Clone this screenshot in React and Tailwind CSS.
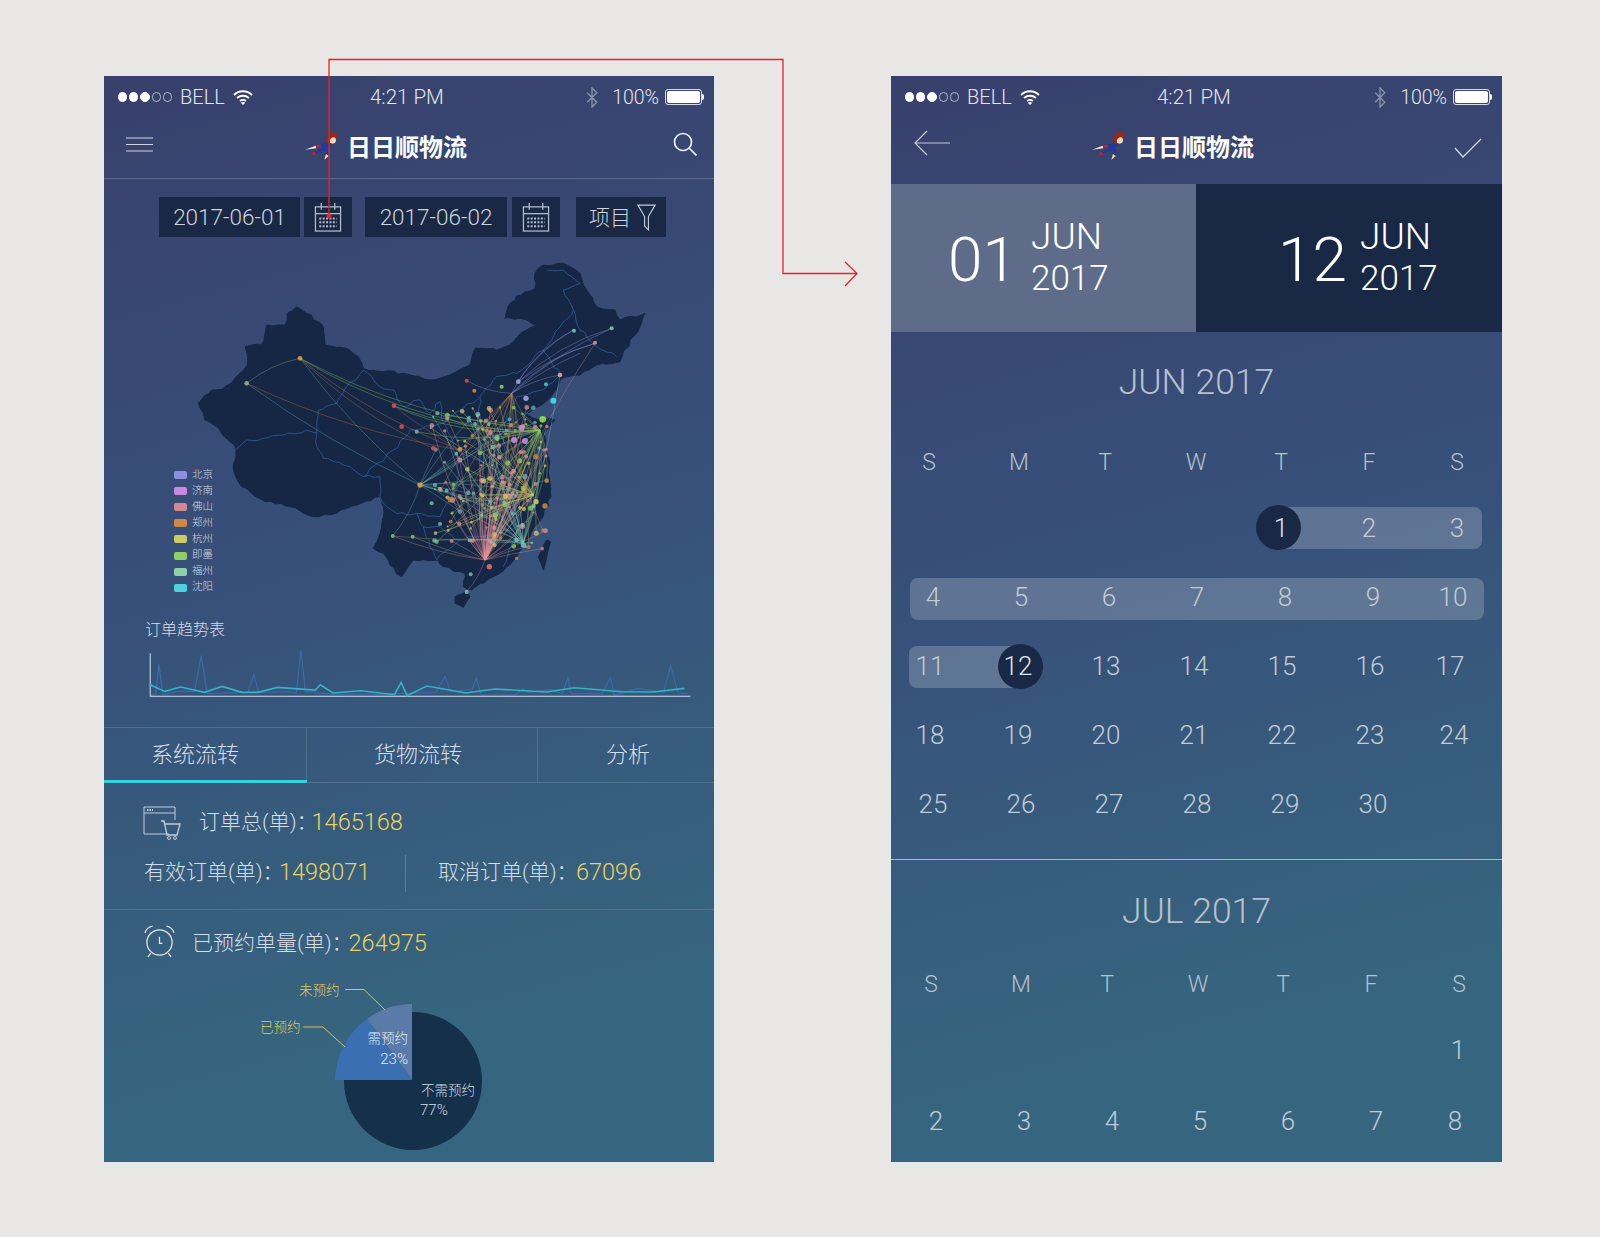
import React from 'react';

const LIGHT = "font-['Roboto','Noto_Sans_CJK_SC',sans-serif] font-light";

// seeded so the map comes out the same every time
function makeRandom(seed) {
  let s = seed;
  return () => {
    s = (s + 0x6d2b79f5) | 0;
    let t = Math.imul(s ^ (s >>> 15), 1 | s);
    t = (t + Math.imul(t ^ (t >>> 7), 61 | t)) ^ t;
    return ((t ^ (t >>> 14)) >>> 0) / 4294967296;
  };
}

// breaks each segment up a bit so outlines don't look like straight cuts
function rugged(pts, seed, amount, closed) {
  const rnd = makeRandom(seed);
  const out = [];
  const list = closed ? [...pts, pts[0]] : pts;
  list.forEach((p, i) => {
    if (i === 0) {
      out.push(p);
      return;
    }
    const q = list[i - 1];
    const len = Math.hypot(p[0] - q[0], p[1] - q[1]);
    const steps = Math.max(1, Math.round(len / 16));
    for (let k = 1; k <= steps; k++) {
      const t = k / steps;
      const j = k === steps ? 0 : amount;
      out.push([q[0] + (p[0] - q[0]) * t + (rnd() - 0.5) * j, q[1] + (p[1] - q[1]) * t + (rnd() - 0.5) * j]);
    }
  });
  return out.map((p) => `${p[0].toFixed(1)},${p[1].toFixed(1)}`).join(' ');
}

const CHINA = rugged([
  [145, 460], [185, 420], [215, 418], [255, 385], [292, 345], [285, 290], [335, 285], [350, 225], [405, 225], [412, 190],
  [440, 170], [470, 190], [520, 230], [525, 285], [590, 295], [625, 320], [640, 355], [700, 365], [760, 370], [825, 388],
  [870, 385], [900, 375], [960, 345], [975, 295], [1040, 300], [1090, 275], [1130, 240], [1160, 225], [1110, 205], [1065, 205],
  [1080, 160], [1125, 125], [1155, 115], [1155, 70], [1180, 45], [1240, 40], [1290, 70], [1310, 120], [1340, 170], [1395, 180],
  [1410, 210], [1485, 190], [1470, 230], [1440, 270], [1410, 335], [1390, 340], [1340, 345], [1290, 375], [1235, 385], [1210, 430],
  [1165, 470], [1125, 490], [1150, 505], [1215, 510], [1180, 550], [1195, 620], [1200, 700], [1203, 740], [1180, 800], [1140, 860],
  [1100, 920], [1070, 950], [1030, 980], [965, 1020], [940, 1010], [945, 970], [880, 950], [865, 930], [790, 930], [755, 980],
  [720, 945], [700, 910], [670, 895], [690, 850], [700, 800], [700, 770], [690, 740], [620, 765], [560, 790], [490, 800],
  [420, 770], [345, 755], [275, 710], [250, 660], [258, 600], [240, 575], [200, 530], [165, 510],
], 3, 9, true);
const HAINAN = rugged([[915, 1040], [950, 1025], [960, 1040], [940, 1072], [915, 1060]], 4, 4, true);
const TAIWAN = rugged([[1190, 870], [1202, 875], [1180, 960], [1165, 920]], 5, 3, true);

const BORDERS = [
  [[255, 600], [290, 570], [340, 565], [400, 555], [470, 540], [500, 550], [500, 590], [520, 625], [600, 650], [640, 680], [690, 680], [690, 740], [710, 770], [740, 790], [800, 790], [820, 830], [870, 830], [930, 870]],
  [[500, 550], [505, 480], [560, 460], [590, 410], [640, 360], [665, 380], [690, 410], [730, 420], [760, 470], [810, 450], [840, 490], [870, 455], [880, 520], [930, 480], [990, 440], [1040, 380], [1100, 370], [1180, 300], [1270, 180], [1240, 120], [1290, 100], [1240, 60], [1190, 60]],
  [[1270, 180], [1290, 240], [1340, 290], [1400, 320]],
  [[1180, 300], [1230, 375], [1180, 420], [1100, 440]],
  [[640, 680], [730, 600], [780, 540], [880, 520], [920, 600], [920, 700], [870, 800], [800, 790]],
  [[920, 600], [1000, 640], [1060, 580], [1170, 540]],
  [[920, 700], [1000, 760], [1090, 740], [1190, 690]],
  [[1000, 760], [990, 860], [930, 870], [860, 930]],
  [[990, 860], [1110, 830], [1160, 790]],
  [[1110, 830], [1060, 950]],
  [[990, 440], [985, 560], [1000, 640], [1000, 760]],
  [[1060, 580], [1090, 740], [1110, 830]],
  [[820, 830], [860, 930]],
  [[1100, 440], [1060, 520], [1060, 580]],
].map((b, i) => rugged(b, 20 + i, 10, false));

const LEGEND = [
  ['北京', '#8f8fe0'], ['济南', '#c98ae0'], ['佛山', '#d08a90'], ['郑州', '#cf8848'],
  ['杭州', '#cdc868'], ['即墨', '#8fcf68'], ['福州', '#90cfa8'], ['沈阳', '#50d0dc'],
];

const curve = (a, b, bend) => {
  const mx = (a[0] + b[0]) / 2 - (b[1] - a[1]) * bend;
  const my = (a[1] + b[1]) / 2 + (b[0] - a[0]) * bend;
  return `M${a[0]} ${a[1]} Q${mx} ${my} ${b[0]} ${b[1]}`;
};

function buildRoutes() {
  const rnd = makeRandom(11);
  const routes = [
    [[450, 325], [290, 400], '#8fb090', 0.12],
    [[450, 325], [1170, 540], '#90d060', 0.1],
    [[450, 325], [1100, 545], '#90d060', 0.11],
    [[450, 325], [930, 600], '#c87850', 0.08],
    [[450, 325], [850, 595], '#c87850', 0.09],
    [[450, 325], [810, 705], '#6fb0b0', 0.06],
    [[290, 400], [930, 600], '#c07850', 0.07],
    [[290, 400], [810, 705], '#6fb0b0', 0.05],
    [[730, 467], [1170, 540], '#90d060', 0.1],
    [[730, 467], [1170, 540], '#90d060', 0.14],
    [[730, 467], [930, 600], '#d06060', 0.04],
    [[800, 545], [1170, 540], '#90d060', 0.12],
    [[862, 490], [1170, 540], '#90d060', 0.16],
    [[950, 392], [1085, 430], '#9c95e0', 0.12],
    [[1385, 235], [1100, 400], '#9c95e0', 0.12],
    [[1385, 235], [1085, 430], '#9c95e0', 0.08],
    [[1335, 280], [1100, 400], '#9c95e0', 0.1],
    [[1335, 280], [1085, 430], '#9c95e0', 0.14],
    [[1270, 240], [1100, 400], '#9c95e0', 0.12],
    [[1270, 240], [1085, 430], '#9c95e0', 0.16],
    [[1290, 310], [1085, 430], '#9c95e0', 0.06],
    [[1230, 375], [1085, 430], '#9c95e0', 0.1],
    [[1335, 280], [1010, 930], '#d08a90', 0.06],
    [[950, 1025], [1005, 930], '#d08a90', 0.1],
    [[728, 858], [1005, 930], '#d08a90', 0.06],
    [[728, 858], [810, 705], '#6fb0b0', 0.1],
    [[788, 860], [1005, 930], '#d08a90', 0.05],
    [[728, 858], [1100, 870], '#c08a50', 0.03],
    [[1170, 540], [1190, 690], '#90d060', -0.12],
    [[1170, 540], [1150, 735], '#90d060', -0.14],
    [[1170, 540], [1120, 880], '#90d060', -0.1],
    [[1170, 540], [1158, 755], '#90d060', -0.18],
    [[1230, 375], [1120, 880], '#70c0c0', -0.03],
  ];
  const hubs = [
    [[1005, 930], '#e29097', 64, 0.1],
    [[1170, 540], '#90d060', 26, 0.07],
    [[1150, 735], '#d0c860', 30, 0.08],
    [[1120, 880], '#80c8b0', 26, 0.08],
    [[810, 705], '#6fb0b0', 14, 0.12],
    [[1085, 430], '#d08a48', 14, 0.1],
  ];
  const dots = [];
  hubs.forEach(([hub, color, count, bend]) => {
    for (let i = 0; i < count; i++) {
      const t = [840 + Math.pow(rnd(), 0.7) * 355, 470 + rnd() * 430];
      routes.push([hub, t, color, (rnd() - 0.5) * 2 * bend]);
      dots.push([t[0], t[1], 3 + rnd() * 5, color]);
    }
  });
  return { routes, dots };
}

const { routes: ROUTES, dots: DOTS } = buildRoutes();

const BIG_DOTS = [
  [450, 325, 7, '#d8a040'], [290, 400, 7, '#90b080'], [732, 467, 7, '#d05050'], [755, 530, 7, '#d05050'],
  [1210, 452, 9, '#40e0f0'], [1178, 508, 10, '#90e050'], [1115, 533, 9, '#c98ae0'], [1092, 570, 9, '#c98ae0'],
  [1125, 573, 9, '#c98ae0'], [1128, 445, 8, '#a8a0e0'], [1105, 395, 7, '#a8a0e0'], [1385, 235, 6, '#90c0b0'],
  [1272, 242, 6, '#80c0b0'], [1335, 278, 6, '#e09090'], [1230, 375, 7, '#e0a0b0'], [950, 392, 6, '#d05050'],
  [973, 422, 6, '#d08a48'], [810, 705, 8, '#d8a040'], [728, 858, 6, '#80b090'], [788, 860, 6, '#80b090'],
  [1018, 950, 8, '#e07070'], [962, 973, 6, '#70b0a0'], [950, 1026, 6, '#80c0b0'], [850, 595, 7, '#d05050'],
  [930, 598, 7, '#d8a040'], [1158, 755, 8, '#d0c860'], [1185, 768, 8, '#c08a40'], [1190, 692, 7, '#c08a40'],
  [1120, 885, 8, '#70c0c0'], [1100, 870, 7, '#70c0c0'], [870, 822, 6, '#70b0a0'], [890, 722, 6, '#70b0a0'],
  [845, 760, 6, '#70b0a0'], [1100, 925, 5, '#c08a40'], [1055, 410, 6, '#90d060'], [862, 490, 6, '#80a8a0'],
  [800, 545, 6, '#80a8a0'], [1188, 403, 6, '#50c0c0'], [855, 705, 6, '#70b0a0'], [870, 716, 6, '#90b8b0'],
];

function ChinaMap() {
  return (
    <svg viewBox="0 0 1560 1110" className="block w-[520px] h-[370px] blur-[0.3px]">
      {[CHINA, HAINAN, TAIWAN].map((shape, i) => (
        <polygon key={i} points={shape} fill="#152745" stroke="#152745" strokeWidth="3" strokeLinejoin="round" />
      ))}
      {BORDERS.map((b, i) => (
        <polyline key={i} points={b} fill="none" stroke="#2a5c98" strokeWidth="2.5" strokeLinejoin="round" />
      ))}
      {ROUTES.map(([a, b, color, bend], i) => (
        <path key={i} d={curve(a, b, bend)} fill="none" stroke={color} strokeWidth="2" strokeOpacity="0.55" />
      ))}
      {DOTS.map(([x, y, r, color], i) => (
        <circle key={i} cx={x} cy={y} r={r} fill={color} fillOpacity="0.75" />
      ))}
      {BIG_DOTS.map(([x, y, r, color], i) => (
        <circle key={i} cx={x} cy={y} r={r} fill={color} fillOpacity="0.9" />
      ))}
    </svg>
  );
}

const TREND = '128,225 165,245 205,232 265,248 310,230 360,248 400,248 450,233 545,241 558,225 590,250 660,243 745,255 762,218 777,258 827,229 925,250 1000,238 1130,247 1200,234 1320,246 1400,247 1478,236';
const SPIKES = '128,255 142,255 150,162 160,255 200,245 240,245 257,137 272,252 375,248 390,195 402,248 480,246 497,250 509,122 520,246 590,254 700,254 850,248 873,200 887,246 942,238 952,205 964,256 1050,256 1070,238 1085,248 1140,240 1170,252 1183,203 1192,252 1270,252 1291,203 1300,258 1360,236 1425,248 1443,168 1462,250 1485,252';

function TrendChart() {
  return (
    <svg viewBox="125 120 1372 145" preserveAspectRatio="none" className="block w-[543px] h-[48px]">
      <polyline points={SPIKES} fill="none" stroke="#3a6aa8" strokeWidth="1.2" vectorEffect="non-scaling-stroke" />
      <polyline points="128,130 128,260 1493,260" fill="none" stroke="#d8e0e8" strokeWidth="1" vectorEffect="non-scaling-stroke" />
      <polyline points={TREND} fill="none" stroke="#2fb4c8" strokeWidth="1.6" vectorEffect="non-scaling-stroke" />
    </svg>
  );
}

function StatusBar() {
  return (
    <div className={`flex items-center h-[42px] pl-[14px] pr-[10px] text-[#e2e6ee] ${LIGHT}`}>
      <div className="flex items-center gap-[2px] w-[54px]">
        {[1, 1, 1, 0, 0].map((on, i) => (
          <span key={i} className={`size-[9.5px] rounded-full border border-white ${on ? 'bg-white' : 'opacity-60'}`} />
        ))}
      </div>
      <span className="ml-[8px] text-[20px] w-[53px]">BELL</span>
      <svg viewBox="0 0 20 15" className="w-[20px] h-[15px]" fill="none" stroke="#fff" strokeWidth="1.8">
        <path d="M1 5 C6 0 14 0 19 5" />
        <path d="M4 8 C7.500 5 12.500 5 16 8" />
        <path d="M7 11 C9 9.500 11 9.500 13 11" />
        <path d="M10 15 L7.800 12.800 C9 11.800 11 11.800 12.200 12.800 Z" fill="#fff" stroke="none" />
      </svg>
      <span className="ml-[117px] text-[20.500px] whitespace-nowrap">4:21 PM</span>
      <div className="ml-auto flex items-center">
        <svg viewBox="0 0 12 22" className="w-[12px] h-[21px]" fill="none" stroke="#8a94aa" strokeWidth="1.4">
          <path d="M1 6 L11 16 L6 21 L6 1 L11 6 L1 16" />
        </svg>
        <span className="ml-[14px] text-[19.500px] pt-[1px]">100%</span>
        <div className="ml-[6px] flex items-center">
          <div className="w-[37px] h-[16px] rounded-[3px] border border-white/80 p-[1px]">
            <div className="w-full h-full rounded-[2px] bg-white" />
          </div>
          <div className="w-[2px] h-[6px] rounded-r-sm bg-white" />
        </div>
      </div>
    </div>
  );
}

function Logo() {
  return (
    <svg viewBox="30 22 105 90" className="w-[35px] h-[30px] shrink-0">
      <path d="M30 78 L62 66 L64 74 Z" fill="#f3ead0" />
      <path d="M88 108 L93 91 L101 97 Z" fill="#f0e4b0" />
      <path d="M64 71 L92 62 M60 90 L88 74 M97 92 L98 76" stroke="#1f3a9c" strokeWidth="7" fill="none" />
      <path d="M103 58 L84 80" stroke="#1f3a9c" strokeWidth="13" fill="none" />
      <ellipse cx="70" cy="68" rx="8" ry="4" fill="#c81f2e" transform="rotate(-15 70 68)" />
      <ellipse cx="57" cy="90" rx="6" ry="5" fill="#c81f2e" />
      <circle cx="113" cy="50" r="10" fill="#f4d4b4" />
      <path d="M96 58 C91 36 104 20 118 24 C128 26 131 38 128 43 C120 37 109 39 105 49 L103 64 Z" fill="#8e2a1e" />
    </svg>
  );
}

function Title() {
  return (
    <div className="flex items-center">
      <Logo />
      <span className="ml-[7px] text-[24px] font-bold text-white font-['Noto_Sans_CJK_SC',sans-serif] leading-none">日日顺物流</span>
    </div>
  );
}

function CalendarIcon() {
  return (
    <svg viewBox="0 0 28 30" className="w-[28px] h-[29px]" fill="none" stroke="#b4bccb" strokeWidth="1.3">
      <rect x="1" y="4" width="26" height="25" />
      <path d="M1 11 H27 M7 0 V7 M21 0 V7" />
      <path d="M5 16 H23 M5 20 H23 M5 24 H23" strokeDasharray="2 1.500" strokeWidth="2" />
    </svg>
  );
}

function DateField({ value, width, gap }) {
  return (
    <div className={`flex ${gap}`}>
      <div className={`${width} h-[40px] pt-[2px] bg-[#182845] flex items-center justify-center text-[22.500px] text-[#ccd3de] ${LIGHT}`}>{value}</div>
      <div className="w-[48px] h-[40px] bg-[#182845] flex items-center justify-center">
        <CalendarIcon />
      </div>
    </div>
  );
}

function PhoneLeft() {
  return (
    <div className="relative w-[610px] h-[1086px] shrink-0 overflow-hidden bg-[linear-gradient(165deg,#38406c_0%,#37517a_45%,#36667f_85%)]">
      <StatusBar />

      <div className="h-[61px] border-b border-[#5a6a8c] flex items-center pl-[22px] pr-[17px]">
        <svg viewBox="0 0 27 15" className="w-[27px] h-[15px] -mt-[8px]" fill="none" stroke="#cfd5e0" strokeWidth="1.2">
          <path d="M0 1 H27 M0 7.500 H27 M0 14 H27" />
        </svg>
        <div className="ml-[152px] -mt-[4px]"><Title /></div>
        <svg viewBox="0 0 24 24" className="ml-auto w-[24px] h-[24px] -mt-[8px]" fill="none" stroke="#eef1f6" strokeWidth="1.700">
          <circle cx="10" cy="10" r="8.500" />
          <path d="M16 16 L23.500 23.500" />
        </svg>
      </div>

      <div className="flex items-center pl-[55px] pt-[18px]">
        <DateField value="2017-06-01" width="w-[141px]" gap="gap-[4px]" />
        <div className="ml-[13px]"><DateField value="2017-06-02" width="w-[142px]" gap="gap-[5px]" /></div>
        <div className={`ml-[16px] w-[90px] h-[40px] pt-[3px] pl-[3px] bg-[#182845] flex items-center justify-center gap-[6px] text-[21px] text-[#ccd3de] ${LIGHT}`}>
          <span>项目</span>
          <svg viewBox="0 0 20 28" className="w-[19px] h-[27px] -mt-[3px]" fill="none" stroke="#c4ccd8" strokeWidth="1.200">
            <path d="M1 1 H19 L12 13 V27 L8 23 V13 Z" />
          </svg>
        </div>
      </div>

      <div className="relative ml-[46px] mt-[13px] w-[520px] h-[370px]">
        <ChinaMap />
        <div className={`absolute left-[24px] top-[217px] flex flex-col ${LIGHT}`}>
          {LEGEND.map(([name, color]) => (
            <div key={name} className="flex items-center h-[16.100px] gap-[5px]">
              <span className="w-[13px] h-[8px] rounded-[2px]" style={{ backgroundColor: color }} />
              <span className="text-[10.500px] leading-none text-[#cfd6e0]">{name}</span>
            </div>
          ))}
        </div>
      </div>

      <div className={`ml-[41px] h-[20px] flex items-center text-[16px] text-[#d4dae4] ${LIGHT}`}>订单趋势表</div>
      <div className="ml-[45px] mt-[10px]"><TrendChart /></div>

      <div className={`mt-[29px] h-[56px] border-y border-[#50708e] flex text-[22px] text-[#d8dee6] ${LIGHT}`}>
        <div className="w-[203px] border-r border-[#50708e] relative pl-[47px] pb-[2px] flex items-center">
          系统流转
          <span className="absolute left-0 right-[-1px] -bottom-[1px] h-[3px] bg-[#32d2e4]" />
        </div>
        <div className="w-[231px] border-r border-[#50708e] pr-[8px] pb-[2px] flex items-center justify-center">货物流转</div>
        <div className="flex-1 pl-[4px] pb-[2px] flex items-center justify-center">分析</div>
      </div>

      <div className={`${LIGHT} text-[21px] text-[#d6dce4]`}>
        <div className="flex items-center pl-[39px] pt-[17px] h-[63px]">
          <svg viewBox="0 0 38 34" className="w-[38px] h-[34px]" fill="none" stroke="#c4ccd6" strokeWidth="1">
            <path d="M26 28 H1 V1 H32 V14" />
            <path d="M1 7 H32" />
            <path d="M4 4 H10" strokeDasharray="1.500 1" strokeWidth="2" />
            <path d="M18 15 H21 L24 29 H34 L37 18 H22" strokeWidth="1.300" />
            <circle cx="26" cy="32" r="1.500" />
            <circle cx="32" cy="32" r="1.500" />
          </svg>
          <span className="ml-[18px]">订单总(单)：</span>
          <span className="-ml-[6px] text-[23.500px] text-[#ebd062]">1465168</span>
        </div>
        <div className="flex items-center pl-[40px] h-[54px]">
          <span className="w-[135px] whitespace-nowrap">有效订单(单)：</span>
          <span className="w-[126px] text-[23.500px] text-[#ebd062]">1498071</span>
          <span className="h-[37px] w-px bg-[#5a7d96]" />
          <span className="ml-[32px] w-[138px] whitespace-nowrap">取消订单(单)：</span>
          <span className="text-[23.500px] text-[#ebd062]">67096</span>
        </div>
      </div>

      <div className="mt-[9px] border-t border-[#50708e]" />

      <div className={`flex items-center pl-[40px] pt-[19px] h-[49px] ${LIGHT} text-[21px] text-[#d6dce4]`}>
        <svg viewBox="0 0 32 34" className="w-[31px] h-[33px] -mt-[6px]" fill="none" stroke="#e4e8ee" strokeWidth="1.300">
          <circle cx="16" cy="18" r="13" />
          <path d="M16 12 V19 H19" />
          <path d="M1 8 C2 4 5 2 9 1 M31 8 C30 4 27 2 23 1" />
          <path d="M7 29 L4 33 M25 29 L28 33" />
        </svg>
        <span className="ml-[17px]">已预约单量(单)：</span>
        <span className="-ml-[4px] text-[23.500px] text-[#ebd062]">264975</span>
      </div>

      <div className="ml-[140px] mt-[20px]">
        <PieChart />
      </div>
    </div>
  );
}

// drawn in page pixels, x minus 244 and y minus 980
function PieChart() {
  const labelFont = "'Roboto','Noto Sans CJK SC',sans-serif";
  return (
    <svg viewBox="0 0 260 180" className="block w-[260px] h-[180px]" fontFamily={labelFont} fontWeight="300">
      <circle cx="169" cy="102" r="69" fill="#15304a" />
      <path d="M168 101 L123 40 A76 76 0 0 0 91 101 Z" fill="#3a70b2" />
      <path d="M168 101 L168 25 A76 76 0 0 0 123 40 Z" fill="#5a7aa8" />
      <polyline points="101,10.500 120,10.500 141,31" fill="none" stroke="#d8c060" strokeWidth="1" />
      <polyline points="59,48 79,48 101,68" fill="none" stroke="#d8c060" strokeWidth="1" />
      <text x="55" y="16" fontSize="13.500" fill="#e0c860">未预约</text>
      <text x="16" y="53" fontSize="13.500" fill="#e0c860">已预约</text>
      <text x="164" y="64" fontSize="13.500" fill="#e4eaf2" textAnchor="end">需预约</text>
      <text x="164" y="85" fontSize="15" fill="#e4eaf2" textAnchor="end">23%</text>
      <text x="177" y="116" fontSize="13.500" fill="#d6dce4">不需预约</text>
      <text x="176" y="136" fontSize="15" fill="#d6dce4">77%</text>
    </svg>
  );
}

const WEEK = [['S', ''], ['M', 'pl-[4px]'], ['T', ''], ['W', 'pl-[6px]'], ['T', ''], ['F', ''], ['S', '']];

const JUN_ROWS = [
  { grid: 'grid-cols-[repeat(7,88px)] -ml-[6px]', days: ['', '', '', '', 1, 2, 3], bar: 'top-[13px] left-[384px] right-[20px]', circle: 'top-[11px] left-[365px]', on: 1 },
  { grid: 'grid-cols-[repeat(6,88px)_72px] -ml-[2px]', days: [4, 5, 6, 7, 8, 9, 10], bar: 'top-[15px] left-[19px] right-[18px]' },
  { grid: 'grid-cols-[repeat(6,88px)_72px] -ml-[5px]', days: [11, 12, 13, 14, 15, 16, 17], bar: 'top-[14px] left-[18px] w-[121px]', circle: 'top-[12px] left-[107px]', on: 12 },
  { grid: 'grid-cols-[repeat(6,88px)_80px] -ml-[5px]', days: [18, 19, 20, 21, 22, 23, 24] },
  { grid: 'grid-cols-[repeat(6,88px)_72px] -ml-[2px]', days: [25, 26, 27, 28, 29, 30, ''] },
];

function WeekRow({ className }) {
  return (
    <div className={`grid grid-cols-[repeat(7,88px)] h-[30px] items-center text-center text-[23px] text-[#b6c0ce] ${className}`}>
      {WEEK.map(([d, nudge], i) => <span key={i} className={nudge}>{d}</span>)}
    </div>
  );
}

function DayRow({ row }) {
  return (
    <div className="relative h-[69px]">
      {row.bar && <div className={`absolute h-[42px] rounded-lg bg-white/20 ${row.bar}`} />}
      {row.circle && <div className={`absolute size-[45px] rounded-full bg-[#182845] ${row.circle}`} />}
      <div className={`relative grid h-full items-center text-center text-[26px] text-[#c2cad6] ${row.grid}`}>
        {row.days.map((d, i) => (
          <span key={i} className={d === row.on ? 'text-[#dfe4ec]' : ''}>{d}</span>
        ))}
      </div>
    </div>
  );
}

function DateHalf({ day, className, dayWidth }) {
  return (
    <div className={`flex items-center ${className}`}>
      <span className={`text-[62px] leading-none pt-[4px] ${dayWidth}`}>{day}</span>
      <div className="leading-none -mt-[2px]">
        <div className="text-[37px]">JUN</div>
        <div className="text-[35px] mt-[6px]">2017</div>
      </div>
    </div>
  );
}

function PhoneRight() {
  return (
    <div className="w-[611px] h-[1086px] shrink-0 overflow-hidden bg-[linear-gradient(165deg,#38406c_0%,#37517a_45%,#36667f_85%)]">
      <StatusBar />

      <div className="h-[66px] flex items-center pl-[23px] pr-[20px]">
        <svg viewBox="0 0 36 26" className="w-[36px] h-[26px] -mt-[16px]" fill="none" stroke="#c4cad8" strokeWidth="1.200">
          <path d="M13 1 L1 13 L13 25 M1 13 H36" />
        </svg>
        <div className="ml-[142px] -mt-[10px]"><Title /></div>
        <svg viewBox="0 0 28 20" className="ml-auto w-[28px] h-[20px] -mt-[6px]" fill="none" stroke="#d4d9e4" strokeWidth="1.300">
          <path d="M1 10 L9 19 L27 1" />
        </svg>
      </div>

      <div className={`flex h-[148px] text-white ${LIGHT}`}>
        <DateHalf day="01" className="w-[305px] bg-[#5e6c8a] pl-[57px]" dayWidth="w-[83px]" />
        <DateHalf day="12" className="flex-1 bg-[#182845] pl-[82px]" dayWidth="w-[82px]" />
      </div>

      <div className={LIGHT}>
        <div className="pt-[33px] text-center text-[35.500px] text-[#b6c0ce] leading-none">JUN 2017</div>
        <WeekRow className="-ml-[6px] mt-[45px]" />
        <div className="mt-[18px]">
          {JUN_ROWS.map((row, i) => <DayRow key={i} row={row} />)}
        </div>
        <div className="mt-[20px] h-px bg-[#a9bac8]" />

        <div className="pt-[34px] text-center text-[35.500px] text-[#b6c0ce] leading-none">JUL 2017</div>
        <WeekRow className="-ml-[4px] mt-[39px]" />
        <div className="mt-[18px]">
          <DayRow row={{ grid: 'grid-cols-[repeat(7,88px)] -ml-[5px]', days: ['', '', '', '', '', '', 1] }} />
          <div className="mt-[2px]">
            <DayRow row={{ grid: 'grid-cols-[repeat(6,88px)_70px] ml-[1px]', days: [2, 3, 4, 5, 6, 7, 8] }} />
          </div>
        </div>
      </div>
    </div>
  );
}

export default function App() {
  return (
    <div className="relative w-[1600px] h-[1237px] overflow-hidden bg-[#e8e7e5] flex gap-[177px] pl-[104px] pt-[76px] font-['Noto_Sans_CJK_SC',sans-serif]">
      <PhoneLeft />
      <PhoneRight />

      {/* red connector from the date button to the calendar screen */}
      <svg viewBox="0 0 1600 1237" className="absolute inset-0 w-[1600px] h-[1237px] pointer-events-none" fill="none" stroke="#e8222c" strokeWidth="1.300">
        <path d="M329 217 V59.500 H783 V273.500 H857" />
        <path d="M845 262 L857 273.500 L845 286" />
        <circle cx="329" cy="216" r="2.500" fill="#e8222c" stroke="none" />
      </svg>
    </div>
  );
}
